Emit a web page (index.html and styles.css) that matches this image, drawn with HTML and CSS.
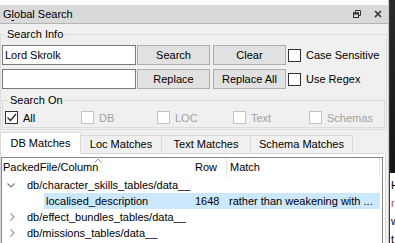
FILE: index.html
```html
<!DOCTYPE html>
<html lang="en">
<head>
  <meta charset="UTF-8">
  <meta name="viewport" content="width=device-width, initial-scale=1.0">
  <title>Global Search</title>
  <link rel="stylesheet" href="styles.css">
</head>
<body>
  <div class="screen">
    <section class="dock">
      <!-- Dock title bar -->
      <header class="dock-title">
        <span class="dock-name">G<u>l</u>obal Search</span>
        <span class="dock-buttons">
          <svg class="float-icon" width="8" height="8" viewBox="0 0 8 8">
            <path d="M2.5 2.5V0.5h5v5H5.5" fill="none" stroke="#333" stroke-width="1"/>
            <rect x="0.5" y="3" width="5" height="4.5" fill="none" stroke="#333" stroke-width="1"/>
            <rect x="0" y="2.5" width="6" height="2" fill="#333"/>
          </svg>
          <svg class="close-icon" width="8" height="8" viewBox="0 0 8 8">
            <path d="M1 1l6 6M7 1L1 7" stroke="#333" stroke-width="1.6"/>
          </svg>
        </span>
      </header>

      <div class="dock-body">
        <fieldset class="group search-info">
          <legend>Search Info</legend>
          <div class="search-grid">
            <input class="line-edit" type="text" value="Lord Skrolk">
            <button class="btn">Search</button>
            <button class="btn">Clear</button>
            <label class="check"><span class="box"></span>Case Sensitive</label>
            <input class="line-edit" type="text" value="">
            <button class="btn">Replace</button>
            <button class="btn">Replace All</button>
            <label class="check"><span class="box"></span>Use Regex</label>
          </div>

          <fieldset class="group search-on">
            <legend>Search On</legend>
            <div class="source-row">
              <label class="check">
                <span class="box">
                  <svg width="11" height="11" viewBox="0 0 11 11"><path d="M1.5 5.5l3 3 5.5-6.5" fill="none" stroke="#222" stroke-width="1.2"/></svg>
                </span>All
              </label>
              <label class="check disabled"><span class="box"></span>DB</label>
              <label class="check disabled"><span class="box"></span>LOC</label>
              <label class="check disabled"><span class="box"></span>Text</label>
              <label class="check disabled"><span class="box"></span>Schemas</label>
            </div>
          </fieldset>
        </fieldset>

        <nav class="tabs">
          <span class="tab tab-db active">DB Matches</span>
          <span class="tab tab-loc">Loc Matches</span>
          <span class="tab tab-text">Text Matches</span>
          <span class="tab tab-schema">Schema Matches</span>
        </nav>

        <div class="tab-pane">
          <div class="tree">
            <div class="tree-head">
              <span class="head-cell first">PackedFile/Column
                <svg class="sort-mark" width="8" height="5" viewBox="0 0 8 5"><path d="M0.5 4.5L4 1l3.5 3.5" fill="none" stroke="#9a9a9a" stroke-width="1"/></svg>
              </span>
              <span class="head-cell row-col">Row</span>
              <span class="head-cell match-col">Match</span>
            </div>

            <div class="tree-row">
              <span class="cell first">
                <span class="branch"><svg width="8" height="5" viewBox="0 0 8 5"><path d="M0.5 0.5L4 4l3.5-3.5" fill="none" stroke="#7a7a7a" stroke-width="1.1"/></svg></span>
                <span class="label">db/character_skills_tables/data__</span>
              </span>
              <span class="cell"></span>
              <span class="cell"></span>
            </div>

            <div class="tree-row child selected">
              <span class="cell first"><span class="label">localised_description</span></span>
              <span class="cell row-col">1648</span>
              <span class="cell match-col">rather than weakening with ...</span>
            </div>

            <div class="tree-row">
              <span class="cell first">
                <span class="branch closed"><svg width="5" height="8" viewBox="0 0 5 8"><path d="M0.5 0.5L4 4L0.5 7.5" fill="none" stroke="#9a9a9a" stroke-width="1.1"/></svg></span>
                <span class="label">db/effect_bundles_tables/data__</span>
              </span>
              <span class="cell"></span>
              <span class="cell"></span>
            </div>

            <div class="tree-row">
              <span class="cell first">
                <span class="branch closed"><svg width="5" height="8" viewBox="0 0 5 8"><path d="M0.5 0.5L4 4L0.5 7.5" fill="none" stroke="#9a9a9a" stroke-width="1.1"/></svg></span>
                <span class="label">db/missions_tables/data__</span>
              </span>
              <span class="cell"></span>
              <span class="cell"></span>
            </div>
          </div>
        </div>
      </div>
    </section>

    <!-- Window behind the dock -->
    <aside class="backdrop">
      <div class="backdrop-top"></div>
      <div class="backdrop-text">
        <div>H</div>
        <div class="accent">r</div>
        <div>w</div>
        <div>t</div>
      </div>
    </aside>
  </div>
</body>
</html>
```

FILE: styles.css
```css
:root {
  --ui-font: "Liberation Sans", Arial, sans-serif;
  --ui-size: 11px;
  --panel-bg: #f0f0f0;
  --frame: #dcdcdc;
  --tab-border: #d9d9d9;
  --select-bg: #cce8ff;
}

* {
  box-sizing: border-box;
}

html, body {
  margin: 0;
  height: 100%;
}

body {
  font-family: var(--ui-font);
  font-size: var(--ui-size);
  color: #000;
  background: #fff;
  overflow: hidden;
}

.screen {
  display: flex;
  height: 243px;
}

/* Dock widget */
.dock {
  flex: none;
  width: 389px;
  display: flex;
  flex-direction: column;
  padding-top: 5px;
  background: #fafafa;
  border-right: 1px solid #c9c9c9;
}

.dock-title {
  flex: none;
  height: 19px;
  display: flex;
  align-items: center;
  justify-content: space-between;
  padding: 0 4px 0 3px;
  background: #d9d9d9;
  border-bottom: 1px solid #b5b5b5;
}

.dock-name u {
  text-decoration-thickness: 1px;
  text-underline-offset: 2px;
}

.dock-buttons {
  display: flex;
  align-items: center;
  gap: 13px;
  padding-right: 2px;
}

.dock-buttons svg {
  display: block;
}

.dock-body {
  flex: 1;
  display: flex;
  flex-direction: column;
  padding-top: 2px;
  background: var(--panel-bg);
}

/* Group boxes */
.group {
  margin: 0;
  min-width: 0;
  border: 1px solid var(--frame);
}

.group legend {
  margin-left: 3px;
  padding: 0 2px;
  line-height: 16px;
}

.search-info {
  margin-right: 1px;
  padding: 3px 1px 1px 1px;
}

.search-grid {
  display: grid;
  grid-template-columns: 134px 74px 76px 1fr;
  grid-auto-rows: 20px;
  row-gap: 4px;
}

.line-edit {
  width: 134px;
  height: 20px;
  margin: 0;
  padding: 0 2px;
  font: inherit;
  color: #000;
  background: #fff;
  border: 1px solid #7a7a7a;
  outline: none;
}

.btn {
  justify-self: end;
  width: 73px;
  height: 20px;
  margin: 0;
  padding: 0;
  font: inherit;
  color: #000;
  background: #e1e1e1;
  border: 1px solid #adadad;
}

.check {
  display: flex;
  align-items: center;
  gap: 5px;
  padding-left: 2px;
  white-space: nowrap;
}

.box {
  flex: none;
  width: 13px;
  height: 13px;
  display: flex;
  align-items: center;
  justify-content: center;
  background: #fff;
  border: 1px solid #333;
}

.check.disabled {
  color: #a0a0a0;
}

.check.disabled .box {
  border-color: #c4c4c4;
}

.search-on {
  margin-top: 3px;
  padding: 2px;
}

.source-row {
  display: grid;
  grid-template-columns: repeat(5, 76px);
  height: 15px;
}

.source-row .check {
  padding-left: 0;
}

/* Tabs */
.tabs {
  flex: none;
  display: flex;
  align-items: flex-end;
  height: 21px;
  margin-top: 2px;
}

.tab {
  flex: none;
  height: 18px;
  margin-right: -1px;
  line-height: 17px;
  text-align: center;
  white-space: nowrap;
  background: var(--panel-bg);
  border: 1px solid var(--tab-border);
  border-bottom: none;
}

.tab-db { width: 81px; }
.tab-loc { width: 82px; }
.tab-text { width: 90px; }
.tab-schema { width: 103px; }

.tab.active {
  position: relative;
  z-index: 1;
  height: 22px;
  margin-bottom: -1px;
  line-height: 20px;
  background: #fff;
}

.tab-pane {
  flex: 1;
  margin-right: 2px;
  padding: 3px 2px 0 0;
  background: #fff;
  border: 1px solid var(--tab-border);
  border-bottom: none;
}

/* Tree view */
.tree {
  height: 100%;
  background: #fff;
  border: 1px solid #828790;
  border-bottom: none;
}

.tree-head,
.tree-row {
  display: grid;
  grid-template-columns: 191px 34px 154px;
}

.tree-head {
  height: 19px;
  line-height: 19px;
}

.head-cell {
  position: relative;
  white-space: nowrap;
}

.head-cell.first {
  padding-left: 1px;
}

.head-cell.row-col {
  padding-left: 2px;
  border-right: 1px solid #e5e5e5;
}

.head-cell.match-col {
  padding-left: 3px;
  border-right: 1px solid #e5e5e5;
  margin-right: 1px;
}

.sort-mark {
  position: absolute;
  top: 0;
  left: 92px;
}

.tree-row {
  height: 16px;
  line-height: 16px;
  white-space: nowrap;
}

.cell {
  overflow: hidden;
}

.cell.first {
  display: flex;
  align-items: center;
}

.branch {
  flex: none;
  width: 25px;
  display: flex;
  align-items: center;
  padding-left: 5px;
}

.branch.closed {
  padding-left: 8px;
}

.branch svg {
  display: block;
}

.tree-row.child .cell.first {
  padding-left: 42px;
}

.tree-row.child .label {
  flex: 1;
  padding-left: 2px;
}

.tree-row.selected .label,
.tree-row.selected .row-col,
.tree-row.selected .match-col {
  background: var(--select-bg);
}

.tree-row .row-col {
  padding-left: 2px;
}

.tree-row .match-col {
  padding-left: 2px;
  margin-right: 1px;
}

/* Background window on the right */
.backdrop {
  flex: 1;
  display: flex;
  flex-direction: column;
  overflow: hidden;
  border-left: 1px solid #3a3a3a;
}

.backdrop-top {
  flex: none;
  height: 173px;
  background: linear-gradient(#2a2a2a, #141414);
}

.backdrop-text {
  padding: 3px 0 0 1px;
  line-height: 18px;
  white-space: nowrap;
}

.backdrop-text .accent {
  color: #b5541c;
}
```
